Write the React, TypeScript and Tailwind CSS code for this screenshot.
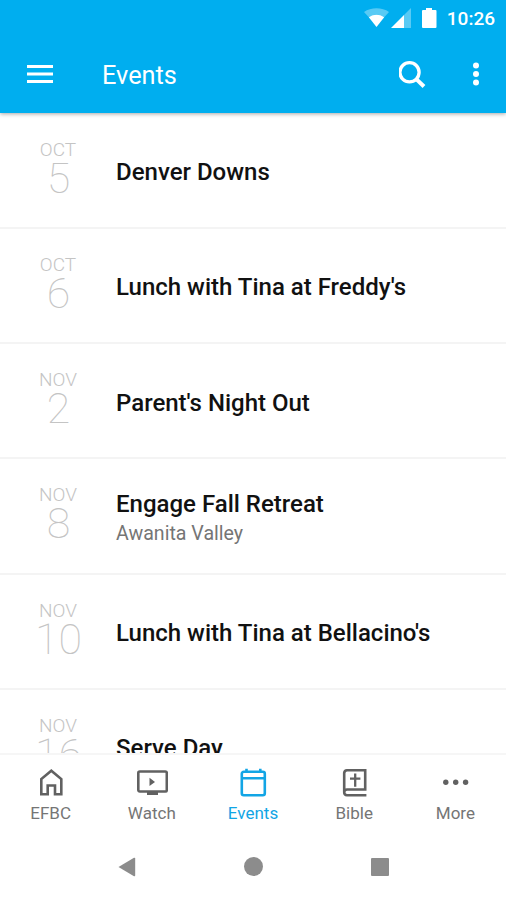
import type { ReactNode } from 'react';

interface EventItem {
  month: string;
  day: string;
  title: string;
  location?: string;
}

const events: EventItem[] = [
  { month: 'OCT', day: '5', title: 'Denver Downs' },
  { month: 'OCT', day: '6', title: "Lunch with Tina at Freddy's" },
  { month: 'NOV', day: '2', title: "Parent's Night Out" },
  { month: 'NOV', day: '8', title: 'Engage Fall Retreat', location: 'Awanita Valley' },
  { month: 'NOV', day: '10', title: "Lunch with Tina at Bellacino's" },
  { month: 'NOV', day: '16', title: 'Serve Day' },
];

function StatusBar() {
  return (
    <div className="flex h-9 items-center justify-end pr-[11px] text-white">
      <svg width="74" height="20" viewBox="0 0 74 20" fill="currentColor">
        <path d="M0 4C7-1 18-1 25 4L20.200 9.300C16 6 9 6 4.800 9.300Z" opacity="0.35" />
        <path d="M4.800 9.300C9 6 16 6 20.200 9.300L12.500 19Z" />
        <path d="M47 0V20H40V7Z" opacity="0.35" />
        <path d="M40 7V20H27Z" />
        <path d="M62 0h6v2h3.500a1 1 0 0 1 1 1v16a1 1 0 0 1-1 1h-12.500a1 1 0 0 1-1-1V3a1 1 0 0 1 1-1H62Z" />
      </svg>
      <span className="ml-[9px] text-[19px] font-medium leading-none">10:26</span>
    </div>
  );
}

function AppBar() {
  return (
    <div className="flex h-[77px] items-center px-[27px] text-white">
      <svg width="26" height="20" viewBox="0 0 26 20" fill="currentColor">
        <path d="M0 0h26v3H0zM0 7.500h26v3H0zM0 15h26v3H0z" />
      </svg>
      <h1 className="ml-[49px] flex-1 pt-[2px] text-[25.300px] leading-none">Events</h1>
      <svg width="28" height="28" viewBox="0 0 28 28" fill="none" stroke="currentColor" strokeWidth="3.3">
        <circle cx="10.500" cy="11.300" r="9.600" />
        <path d="M17.300 18.100 25 25.500" strokeWidth="4" />
      </svg>
      <svg className="ml-[46px]" width="6" height="26" viewBox="0 0 6 26" fill="currentColor">
        <circle cx="3" cy="3.500" r="3" />
        <circle cx="3" cy="12" r="3" />
        <circle cx="3" cy="20.500" r="3" />
      </svg>
    </div>
  );
}

function EventRow({ event }: { event: EventItem }) {
  return (
    <li className="flex h-[115.250px] shrink-0 items-center border-b-2 border-[#f4f4f4]">
      <div className="flex w-[116px] shrink-0 flex-col items-center pb-1 text-[#c4c4c4]">
        <span className="text-[19px] font-light leading-[20px]">{event.month}</span>
        <span className="pl-px text-[43px] font-thin leading-[37px]">{event.day}</span>
      </div>
      <div className={event.location ? 'pt-[6px]' : 'pt-1'}>
        <h2 className="text-[24px] font-medium leading-[28px] text-[#111111]">{event.title}</h2>
        {event.location && <p className="pt-px text-[19.600px] leading-[29px] text-[#757575]">{event.location}</p>}
      </div>
    </li>
  );
}

function Tab({ label, active, children }: { label: string; active?: boolean; children: ReactNode }) {
  return (
    <div className={active ? 'flex flex-1 flex-col items-center text-[#12a5e5]' : 'flex flex-1 flex-col items-center text-[#616161]'}>
      <svg width="32" height="30" viewBox="0 0 32 30" fill="none" stroke="currentColor" strokeWidth="2.6">
        {children}
      </svg>
      <span className={active ? 'mt-[5px] text-[17px] leading-[20px]' : 'mt-[5px] text-[17px] leading-[20px] text-[#757575]'}>
        {label}
      </span>
    </div>
  );
}

function TabBar() {
  return (
    <nav className="flex h-[80px] border-t-2 border-[#f6f6f6] bg-white pt-[13px]">
      <Tab label="EFBC">
        <path d="M6.300 26.200V11L16.300 2.700 26.300 11V26.200H20V17.500H12.700V26.200Z" />
      </Tab>
      <Tab label="Watch">
        <rect x="2.300" y="3.500" width="28.500" height="20" rx="1.500" />
        <path d="M13.500 9.800V18L19 13.900Z" fill="currentColor" stroke="none" />
        <path d="M11 25.300H22" strokeWidth="3.4" />
      </Tab>
      <Tab label="Events" active>
        <rect x="4.800" y="3.800" width="23" height="23.500" rx="2" />
        <path d="M4.800 10.200H27.800M9.500 0.800V4M23.300 0.800V4" />
      </Tab>
      <Tab label="Bible">
        <path d="M28.400 27.200H9A3 3 0 0 1 6.200 24.200V5A3 3 0 0 1 9 2.300H27.200V21.500H9A2.800 2.800 0 0 0 6.200 24.300" />
        <path d="M17.200 5.500V18.800M12 10.700H22.400" strokeWidth="2.3" />
      </Tab>
      <Tab label="More">
        <g fill="currentColor" stroke="none">
          <circle cx="6.800" cy="14.300" r="2.700" />
          <circle cx="16.700" cy="14.300" r="2.700" />
          <circle cx="26.600" cy="14.300" r="2.700" />
        </g>
      </Tab>
    </nav>
  );
}

function SystemNav() {
  return (
    <div className="flex h-[67px] items-center justify-center gap-[108px] bg-white text-[#8c8c8c]">
      <svg width="18" height="20" viewBox="0 0 18 20" fill="currentColor">
        <path d="M0.500 10 16 0.800Q17.200 0.500 17.200 1.500V18.500Q17.200 19.500 16 19.200Z" />
      </svg>
      <div className="size-[19px] rounded-full bg-[#8c8c8c]" />
      <div className="size-[18px] rounded-[1px] bg-[#8c8c8c]" />
    </div>
  );
}

export default function App() {
  return (
    <div className="flex h-[900px] w-[506px] flex-col overflow-hidden bg-white font-['Roboto',sans-serif]">
      <header className="relative z-10 h-[113px] shrink-0 bg-[#00aeef] shadow-[0_1px_4px_rgba(0,0,0,0.35)]">
        <StatusBar />
        <AppBar />
      </header>
      <ul className="flex h-[640px] shrink-0 flex-col overflow-hidden pt-[0.500px]">
        {events.map((event) => (
          <EventRow key={`${event.month}-${event.day}`} event={event} />
        ))}
      </ul>
      <TabBar />
      <SystemNav />
    </div>
  );
}
